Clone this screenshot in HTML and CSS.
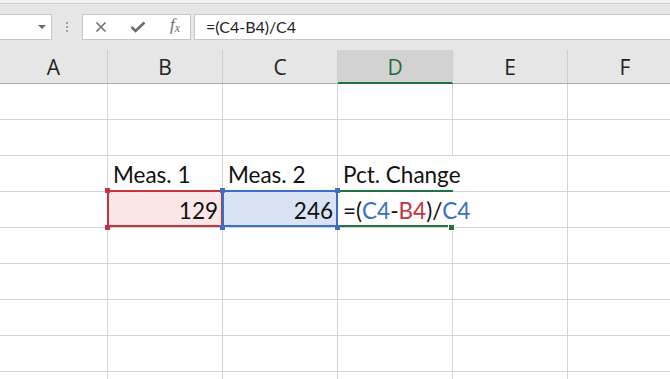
FILE: index.html
```html
<!DOCTYPE html>
<html lang="en">
<head>
    <meta charset="UTF-8">
    <meta name="viewport" content="width=device-width, initial-scale=1.0">
    <title>Percent Change</title>
    <link rel="stylesheet" href="styles.css">
</head>
<body>
    <div class="topstrip"></div>

    <!-- Formula bar -->
    <div class="toolbar">
        <div class="namebox"><span class="drop"></span></div>
        <div class="grip"><i></i><i></i><i></i></div>
        <div class="fbuttons">
            <svg class="ico" width="12" height="12" viewBox="0 0 12 12"><path d="M1.5 1.5 L10.5 10.5 M10.5 1.5 L1.5 10.5" stroke="#6e6e6e" stroke-width="1.6" fill="none"/></svg>
            <svg class="ico" width="16" height="12" viewBox="0 0 16 12"><path d="M1.5 6 L5.5 10 L14.5 1.5" stroke="#6e6e6e" stroke-width="2.6" fill="none"/></svg>
            <span class="fx">f<sub>x</sub></span>
        </div>
        <div class="formula">=(C4-B4)/C4</div>
    </div>

    <!-- Sheet -->
    <div class="sheet">
        <div class="colhead">
            <div>A</div><div>B</div><div>C</div><div class="cur">D</div><div>E</div><div>F</div>
        </div>
        <div class="row"><div></div><div></div><div></div><div></div><div></div><div></div></div>
        <div class="row"><div></div><div></div><div></div><div></div><div></div><div></div></div>
        <div class="row">
            <div></div>
            <div class="txt">Meas. 1</div>
            <div class="txt">Meas. 2</div>
            <div class="txt spill">Pct. Change</div>
            <div></div><div></div>
        </div>
        <div class="row">
            <div></div>
            <div class="txt num ref-red">129
                <span class="h tl"></span><span class="h tr"></span><span class="h bl"></span><span class="h br"></span>
            </div>
            <div class="txt num ref-blue">246
                <span class="h tl"></span><span class="h tr"></span><span class="h bl"></span><span class="h br"></span>
            </div>
            <div class="txt spill editing">=(<span class="c-blue">C4</span>-<span class="c-red">B4</span>)/<span class="c-blue">C4</span>
                <span class="fill"></span>
            </div>
            <div></div><div></div>
        </div>
        <div class="row"><div></div><div></div><div></div><div></div><div></div><div></div></div>
        <div class="row"><div></div><div></div><div></div><div></div><div></div><div></div></div>
        <div class="row"><div></div><div></div><div></div><div></div><div></div><div></div></div>
        <div class="row"><div></div><div></div><div></div><div></div><div></div><div></div></div>
        <div class="row short"><div></div><div></div><div></div><div></div><div></div><div></div></div>
    </div>
</body>
</html>
```

FILE: styles.css
```css
body {
    margin: 0;
    width: 670px;
    height: 379px;
    overflow: hidden;
    background: #fff;
    font-family: Lato, "Liberation Sans", sans-serif;
}
.topstrip {
    height: 3px;
    background: #f1f1f1;
    border-bottom: 1px solid #cfcfcf;
}
.toolbar {
    display: flex;
    align-items: flex-start;
    height: 46px;
    padding-top: 10px;
    box-sizing: border-box;
    background: #e6e6e6;
}
.namebox {
    position: relative;
    width: 62px;
    height: 26px;
    margin-left: -10px;
    box-sizing: border-box;
    background: #fff;
    border: 1px solid #c6c6c6;
}
.drop {
    position: absolute;
    left: 47px;
    top: 10px;
    border-left: 4px solid transparent;
    border-right: 4px solid transparent;
    border-top: 4px solid #6b6b6b;
}
.grip {
    display: flex;
    flex-direction: column;
    gap: 2px;
    margin: 8px 14px 0 14px;
}
.grip i {
    width: 2px;
    height: 2px;
    background: #a5a5a5;
}
.fbuttons {
    display: flex;
    align-items: center;
    justify-content: space-between;
    width: 109px;
    height: 26px;
    box-sizing: border-box;
    padding: 0 10px 0 12px;
    background: #fff;
    border: 1px solid #c6c6c6;
}
.fx {
    font-family: "Liberation Serif", serif;
    font-style: italic;
    font-size: 17px;
    color: #6e6e6e;
    margin-top: -4px;
}
.fx sub {
    font-size: 12px;
    vertical-align: -2px;
}
.formula {
    flex: 1;
    height: 26px;
    margin-left: 3px;
    box-sizing: border-box;
    padding: 2px 0 0 11px;
    background: #fff;
    border: 1px solid #c6c6c6;
    border-right: none;
    font-size: 16px;
    color: #222;
}

/* grid */
.sheet {
    width: 683px;
}
.colhead, .row {
    display: grid;
    grid-template-columns: 108px repeat(5, 115px);
}
.colhead {
    height: 34px;
    background: #e6e6e6;
    border-bottom: 1px solid #ababab;
    box-sizing: border-box;
}
.colhead div {
    display: flex;
    align-items: center;
    justify-content: center;
    border-right: 1px solid #cdcdcd;
    font-family: "Open Sans", sans-serif;
    font-size: 21px;
    color: #222;
}
.colhead .cur {
    background: #d2d2d2;
    color: #1f6e43;
    box-shadow: inset 0 -1px 0 #217346, 0 1px 0 #217346;
}
.row {
    height: 36px;
}
.row.short {
    height: 8px;
}
.row div {
    position: relative;
    box-sizing: border-box;
    border-right: 1px solid #d4d4d4;
    border-bottom: 1px solid #d4d4d4;
}
.txt {
    display: flex;
    align-items: flex-end;
    padding: 0 4px 4px 5px;
    font-size: 22.5px;
    line-height: 24px;
    color: #111;
    white-space: nowrap;
}
.num {
    justify-content: flex-end;
}
.row .spill {
    border-right-color: transparent;
}
.ref-red {
    background: #f9e6e6;
}
.ref-blue {
    background: #dae3f3;
}
.ref-red::after, .ref-blue::after, .editing::after {
    content: "";
    position: absolute;
    top: -2px;
    left: -1px;
    right: -1px;
    bottom: 0;
    pointer-events: none;
}
.ref-red::after {
    border: 2px solid #c3343f;
}
.ref-blue::after {
    border: 2px solid #3a6fc6;
}
.editing::after {
    border-top: 2px solid #217346;
    border-bottom: 2px solid #217346;
}
.h {
    position: absolute;
    width: 5px;
    height: 5px;
    z-index: 2;
}
.ref-red .h { background: #c3343f; }
.ref-blue .h { background: #3a6fc6; z-index: 3; }
.h.tl { left: -3px; top: -4px; }
.h.tr { right: -3px; top: -4px; }
.h.bl { left: -3px; bottom: -3px; }
.h.br { right: -3px; bottom: -3px; }
.c-blue { color: #3a6fc6; }
.c-red { color: #c3343f; }
.fill {
    position: absolute;
    right: -3px;
    bottom: -4px;
    width: 5px;
    height: 5px;
    background: #217346;
    border: 1px solid #fff;
    z-index: 3;
}
```
